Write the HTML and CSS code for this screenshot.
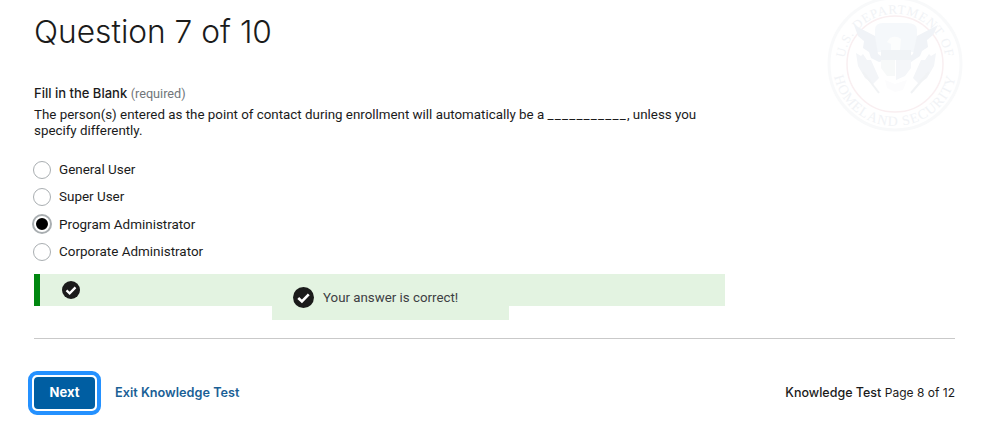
FILE: index.html
```html
<!DOCTYPE html>
<html lang="en">
<head>
    <meta charset="UTF-8" />
    <title>Knowledge Test</title>
    <link rel="stylesheet" href="styles.css">
</head>
<body>
    <div class="page">
        <svg class="seal" viewBox="0 0 140 140" aria-hidden="true">
            <defs>
                <path id="sealTop" d="M 22 88 A 51 51 0 1 1 118 88" />
                <path id="sealBottom" d="M 8 70 A 62 62 0 0 0 132 70" />
            </defs>
            <circle cx="70" cy="70" r="66" fill="none" stroke="#f8f9fa" stroke-width="3" />
            <circle cx="70" cy="70" r="48" fill="none" stroke="#f9eff1" stroke-width="1.5" />
            <text class="seal-text"><textPath href="#sealTop" startOffset="50%" text-anchor="middle">U.S. DEPARTMENT OF</textPath></text>
            <text class="seal-text seal-text-bottom"><textPath href="#sealBottom" startOffset="50%" text-anchor="middle">HOMELAND SECURITY</textPath></text>
            <path fill="#f5f8fb" d="M50 36 Q50 29 58 29 H82 Q92 29 92 36 V58 H50 Z" />
            <path fill="#f0f3f7" d="M29 31 L50 42 L53 60 L62 66 L54 68 L46 64 L44 58 L38 54 L39 47 L33 42 Z" />
            <path fill="#f0f3f7" d="M113 31 L92 42 L88 60 L80 66 L86 68 L95 62 L97 57 L103 53 L102 46 L108 41 Z" />
            <path fill="#fcfdfd" d="M65 44 Q71 41 76 45 L75 56 H66 V50 L62 48 Z" />
            <path fill="#f0f3f6" d="M56 56 H86 V66 H56 Z" />
            <path fill="#f7f9f9" d="M56 66 H70 V82 L62 82 L56 74 Z" />
            <path fill="#f4f6f9" d="M71 66 H86 V74 L80 82 L71 86 Z" />
            <path fill="#f3f5f8" d="M31 59 L36 62 L38 60 L42 66 L46 66 L54 84 L48 90 L40 84 L33 72 Z" />
            <path fill="#f3f5f8" d="M111 59 L106 62 L104 60 L100 66 L96 66 L88 84 L94 90 L102 84 L109 72 Z" />
            <path fill="#fcfcfd" d="M60 86 L70 90 L82 86 L78 96 L70 98 L62 94 Z" />
            <path fill="none" stroke="#f1f3f5" stroke-width="2" d="M38 78 L54 99 M104 78 L86 99" />
        </svg>

        <h1 class="title">Question 7 of 10</h1>

        <p class="question-type">Fill in the Blank <span class="required">(required)</span></p>
        <p class="question-text">The person(s) entered as the point of contact during enrollment will automatically be a <span class="blank">___________</span>, unless you<br>specify differently.</p>

        <div class="options">
            <label class="option"><span class="radio"></span>General User</label>
            <label class="option"><span class="radio"></span>Super User</label>
            <label class="option"><span class="radio selected"></span>Program Administrator</label>
            <label class="option"><span class="radio"></span>Corporate Administrator</label>
        </div>

        <div class="alert">
            <svg class="check check-small" viewBox="0 0 24 24"><circle cx="12" cy="12" r="12" /><path d="M6 12.5l4.2 4L18 8.5" /></svg>
            <div class="alert-body">
                <svg class="check" viewBox="0 0 24 24"><circle cx="12" cy="12" r="12" /><path d="M6 12.5l4.2 4L18 8.5" /></svg>
                <span>Your answer is correct!</span>
            </div>
        </div>

        <hr class="divider" />

        <div class="footer">
            <div class="next-ring"><button class="next">Next</button></div>
            <a class="exit" href="#">Exit Knowledge Test</a>
            <div class="progress"><strong>Knowledge Test</strong> <span class="page-count">Page 8 of 12</span></div>
        </div>
    </div>
</body>
</html>
```

FILE: styles.css
```css
body {
    margin: 0;
    background-color: #fff;
    color: #1b1b1b;
    font-family: "Inter", "Roboto", sans-serif;
}

.page {
    position: relative;
    width: 921px;
    margin-left: 34px;
}

.seal {
    position: absolute;
    left: 791px;
    top: -6px;
    width: 140px;
    height: 140px;
}

.seal-text {
    font-family: "Liberation Serif", serif;
    font-size: 13px;
    fill: #f1f3f6;
    letter-spacing: 0.8px;
}

.seal-text-bottom {
    font-size: 14px;
    letter-spacing: 1px;
}

.title {
    margin: 0;
    padding-top: 12px;
    font-size: 31.7px;
    line-height: 40px;
    font-weight: 300;
}

.question-type {
    margin: 32px 0 0;
    font-size: 13px;
    line-height: 18px;
    font-weight: 500;
}

.required {
    color: #71767a;
    font-family: "Roboto", sans-serif;
    font-size: 12.7px;
    font-weight: 400;
}

.question-text {
    width: 691px;
    margin: 4px 0 0;
    font-family: "Roboto", sans-serif;
    font-size: 13.35px;
    line-height: 16px;
}

.blank {
    letter-spacing: 1.2px;
}

.options {
    display: flex;
    flex-direction: column;
    gap: 9.4px;
    margin-top: 21.5px;
}

.option {
    display: flex;
    align-items: center;
    gap: 8px;
    height: 18px;
    margin-left: -1px;
    font-family: "Roboto", sans-serif;
    font-size: 13.45px;
}

.radio {
    box-sizing: border-box;
    width: 18px;
    height: 18px;
    border: 1px solid #a9aeb1;
    border-radius: 50%;
    background-color: #fff;
}

.radio.selected {
    background-color: #000;
    border: 2px solid #fff;
    box-shadow: 0 0 0 2px #a9aeb1;
    width: 16px;
    height: 16px;
    margin: 0 1px;
}

.alert {
    display: flex;
    align-items: flex-start;
    box-sizing: border-box;
    width: 691px;
    height: 32px;
    margin-top: 13.5px;
    border-left: 6px solid #00870f;
    background-color: #e3f3e1;
}

.check {
    flex: none;
    width: 21px;
    height: 21px;
}

.check circle {
    fill: #1b1b1b;
}

.check path {
    fill: none;
    stroke: #fff;
    stroke-width: 3;
}

.check-small {
    width: 18px;
    height: 18px;
    margin: 7px 0 0 22px;
}

.alert-body {
    display: flex;
    align-items: center;
    gap: 9px;
    box-sizing: border-box;
    width: 237px;
    height: 46px;
    margin-left: 192px;
    padding-left: 21px;
    background-color: #e3f3e1;
    font-family: "Roboto", sans-serif;
    font-size: 13.3px;
    color: #3d4043;
}

.divider {
    height: 1px;
    margin: 32px 0 0;
    border: none;
    background-color: #c9c9c9;
}

.footer {
    display: flex;
    align-items: center;
    margin-top: 32px;
    margin-left: -6px;
}

.next-ring {
    display: flex;
    padding: 2px;
    border: 4px solid #2491ff;
    border-radius: 9px;
}

.next {
    width: 61px;
    height: 32px;
    padding: 0 0 2px;
    border: none;
    border-radius: 4px;
    background-color: #005ea2;
    color: #fff;
    font-family: "Inter", sans-serif;
    font-size: 13px;
    font-weight: 700;
}

.exit {
    margin-left: 14px;
    margin-bottom: 2px;
    color: #1a5f96;
    font-size: 12.7px;
    font-weight: 600;
    text-decoration: none;
}

.progress {
    margin-left: auto;
    margin-bottom: 2px;
    font-size: 12.5px;
}

.progress strong {
    font-weight: 500;
}

.page-count {
    font-size: 12px;
}
```
